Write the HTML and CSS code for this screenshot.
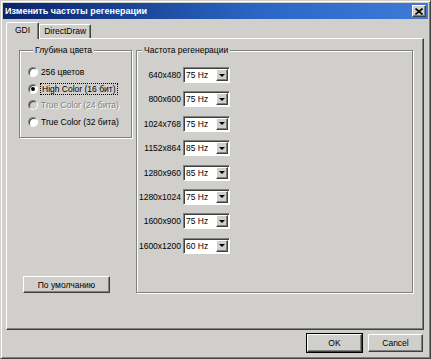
FILE: index.html
```html
<!DOCTYPE html>
<html lang="ru">

<head>
    <meta charset="UTF-8">
    <meta name="viewport" content="width=device-width, initial-scale=1.0">
    <title>Изменить частоты регенерации</title>
    <link rel="stylesheet" href="styles.css">
</head>

<body>

    <div class="window">
        <div class="titlebar">
            <span class="title">Изменить частоты регенерации</span>
            <span class="close-btn">
                <svg width="8" height="7" viewBox="0 0 8 7">
                    <path d="M0.5 0.5 L7.5 6.5 M7.5 0.5 L0.5 6.5" stroke="#000" stroke-width="1.6"/>
                </svg>
            </span>
        </div>

        <div class="content">
            <div class="tabs">
                <div class="tab active">GDI</div>
                <div class="tab">DirectDraw</div>
            </div>

            <div class="panel">
                <div class="left-col">
                    <fieldset class="group depth-group">
                        <legend>Глубина цвета</legend>
                        <div class="radio-row">
                            <span class="radio"></span>
                            <span>256 цветов</span>
                        </div>
                        <div class="radio-row">
                            <span class="radio checked"></span>
                            <span class="focused">High Color (16 бит)</span>
                        </div>
                        <div class="radio-row disabled">
                            <span class="radio"></span>
                            <span>True Color (24 бита)</span>
                        </div>
                        <div class="radio-row">
                            <span class="radio"></span>
                            <span>True Color (32 бита)</span>
                        </div>
                    </fieldset>

                    <button class="btn default-btn">По умолчанию</button>
                </div>

                <fieldset class="group rate-group">
                    <legend>Частота регенерации</legend>
                    <div id="rates"></div>
                </fieldset>
            </div>

            <div class="footer">
                <button class="btn ok-btn">OK</button>
                <button class="btn">Cancel</button>
            </div>
        </div>
    </div>

    <script>
        const modes = [
            { res: '640x480', hz: '75 Hz' },
            { res: '800x600', hz: '75 Hz' },
            { res: '1024x768', hz: '75 Hz' },
            { res: '1152x864', hz: '85 Hz' },
            { res: '1280x960', hz: '85 Hz' },
            { res: '1280x1024', hz: '75 Hz' },
            { res: '1600x900', hz: '75 Hz' },
            { res: '1600x1200', hz: '60 Hz' }
        ];

        // Build the resolution / refresh rate rows
        document.getElementById('rates').innerHTML = modes.map(m => `
            <div class="rate-row">
                <span class="res">${m.res}</span>
                <div class="combo">
                    <span class="combo-value">${m.hz}</span>
                    <span class="combo-arrow"><i></i></span>
                </div>
            </div>
        `).join('');
    </script>

</body>

</html>
```

FILE: styles.css
```css
body {
    margin: 0;
    font-family: 'Liberation Sans', Arial, sans-serif;
    font-size: 8.5px;
    color: #000;
    background: #d0cfcc;
}

.window {
    width: 431px;
    height: 359px;
    box-sizing: border-box;
    padding: 2px;
    border: 1px solid;
    border-color: #d0cfcc #404040 #404040 #d0cfcc;
    box-shadow: inset 1px 1px 0 #fff, inset -1px -1px 0 #808080;
    background: #d0cfcc;
}

.titlebar {
    height: 16px;
    display: flex;
    align-items: center;
    justify-content: space-between;
    padding: 0 2px 0 2px;
    background: linear-gradient(to right, #0a246a, #2b66c4 60%, #3e7ad6);
}

.title {
    color: #fff;
    font-weight: bold;
    font-size: 9px;
}

.close-btn {
    width: 14px;
    height: 12px;
    box-sizing: border-box;
    display: flex;
    align-items: center;
    justify-content: center;
    background: #d0cfcc;
    border: 1px solid;
    border-color: #fff #404040 #404040 #fff;
    box-shadow: inset -1px -1px 0 #808080;
}

.content {
    padding: 3px 4px 0 3px;
}

.tabs {
    display: flex;
    align-items: flex-end;
    height: 16px;
    padding-left: 1px;
}

.tab {
    height: 13px;
    line-height: 13px;
    padding: 0 4px;
    border: 1px solid;
    border-color: #fff #404040 transparent #fff;
    border-bottom: none;
    border-radius: 2px 2px 0 0;
    box-shadow: inset -1px 0 0 #808080;
}

.tab.active {
    height: 16px;
    line-height: 14px;
    padding: 0 8px 0 8px;
    margin-left: -1px;
    margin-bottom: -1px;
    background: #d0cfcc;
    position: relative;
    z-index: 1;
}

.panel {
    height: 292px;
    box-sizing: border-box;
    display: flex;
    gap: 4px;
    padding: 6px 10px 36px 12px;
    border: 1px solid;
    border-color: #fff #404040 #404040 #fff;
    box-shadow: inset -1px -1px 0 #808080;
}

.left-col {
    width: 113px;
    display: flex;
    flex-direction: column;
    justify-content: space-between;
}

.group {
    margin: 0;
    padding: 0;
    border: 1px solid #808080;
    box-shadow: 1px 1px 0 #fff, inset 1px 1px 0 #fff;
    min-width: 0;
}

.group legend {
    padding: 0 2px;
    margin-left: 5px;
    line-height: 10px;
    background: #d0cfcc;
}

.depth-group {
    height: 93px;
    box-sizing: border-box;
    padding: 11px 0 0 8px;
}

.radio-row {
    display: flex;
    align-items: center;
    gap: 3px;
    height: 12px;
    margin-bottom: 4.7px;
}

.radio {
    width: 10px;
    height: 10px;
    box-sizing: border-box;
    border-radius: 50%;
    border: 1px solid;
    border-color: #808080 #fff #fff #808080;
    box-shadow: inset 1px 1px 0 #404040;
    background: #fff;
    display: flex;
    align-items: center;
    justify-content: center;
}

.radio.checked::after {
    content: '';
    width: 4px;
    height: 4px;
    border-radius: 50%;
    background: #000;
}

.focused {
    outline: 1px dotted #000;
    outline-offset: 0;
    padding: 0 1px;
}

.disabled {
    color: #808080;
    text-shadow: 1px 1px 0 #fff;
}

.disabled .radio {
    background: #d0cfcc;
}

.rate-group {
    flex: 1;
    padding: 12px 0 0 0;
}

.rate-row {
    display: flex;
    align-items: center;
    gap: 2px;
    height: 16px;
    margin-bottom: 8.4px;
}

.res {
    width: 44px;
    text-align: right;
}

.combo {
    width: 47px;
    height: 16px;
    box-sizing: border-box;
    display: flex;
    align-items: center;
    background: #fff;
    border: 1px solid;
    border-color: #808080 #fff #fff #808080;
    box-shadow: inset 1px 1px 0 #404040;
    padding: 1px 1px 1px 2px;
}

.combo-value {
    flex: 1;
}

.combo-arrow {
    width: 12px;
    height: 12px;
    box-sizing: border-box;
    display: flex;
    align-items: center;
    justify-content: center;
    background: #d0cfcc;
    border: 1px solid;
    border-color: #fff #404040 #404040 #fff;
    box-shadow: inset -1px -1px 0 #808080;
}

.combo-arrow i {
    width: 0;
    height: 0;
    border-left: 3px solid transparent;
    border-right: 3px solid transparent;
    border-top: 3px solid #000;
}

.btn {
    font-family: 'Liberation Sans', Arial, sans-serif;
    font-size: 8.5px;
    color: #000;
    height: 18px;
    padding: 0;
    background: #d0cfcc;
    border: 1px solid;
    border-color: #fff #404040 #404040 #fff;
    box-shadow: inset -1px -1px 0 #808080;
}

.default-btn {
    width: 87px;
    height: 17px;
    margin-left: 4px;
}

.footer {
    display: flex;
    justify-content: flex-end;
    gap: 6px;
    padding-top: 4px;
    padding-right: 1px;
}

.footer .btn {
    width: 55px;
}

.ok-btn {
    outline: 1px solid #000;
}
```
